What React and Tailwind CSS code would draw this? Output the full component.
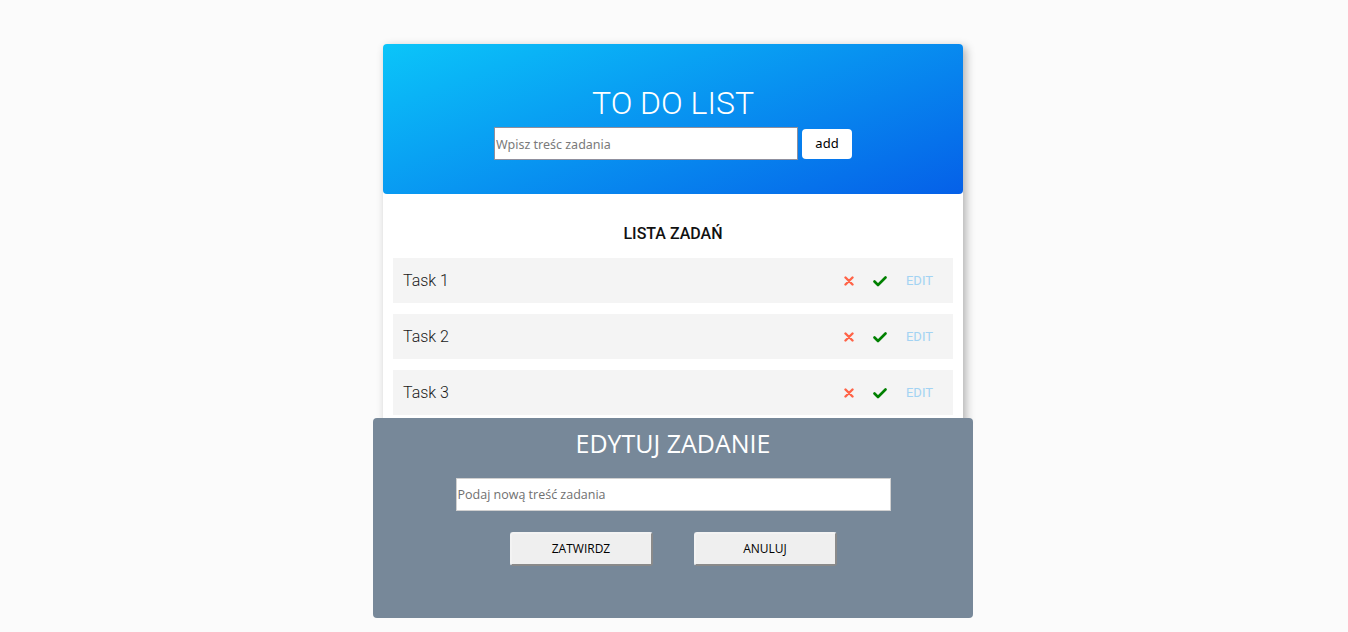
import React, { useState } from "react";

const tasks = ["Task 1", "Task 2", "Task 3"];

const CrossIcon = () => (
  <svg width="10" height="10" viewBox="0 0 10 10">
    <path d="M1.5 1.5 L8.5 8.5 M8.5 1.5 L1.5 8.5" stroke="#ff6347" strokeWidth="2.4" strokeLinecap="round" />
  </svg>
);

const CheckIcon = () => (
  <svg width="14" height="11" viewBox="0 0 14 11">
    <path d="M1.5 5.5 L5 9 L12.5 1.5" stroke="#008000" strokeWidth="2.6" fill="none" strokeLinecap="round" strokeLinejoin="round" />
  </svg>
);

const TaskRow = ({ name }) => (
  <div className="flex items-center h-[45px] bg-[#f4f4f4] pl-[10px] pr-[20px]">
    <span className="flex-1 text-[16px] text-[#1a1a1a] font-light pt-[1px]">{name}</span>
    <div className="flex items-center gap-[19px] pt-[1px]">
      <button className="flex cursor-pointer">
        <CrossIcon />
      </button>
      <button className="flex cursor-pointer">
        <CheckIcon />
      </button>
      <button className="text-[13px] text-[#a3d3f3] cursor-pointer">EDIT</button>
    </div>
  </div>
);

const App = () => {
  const [text, setText] = useState("");
  const [editText, setEditText] = useState("");

  return (
    <div className="min-h-screen bg-[#fbfbfb] pt-[44px] font-['Roboto',sans-serif]">
      <div className="w-[580px] ml-[calc(50%-291px)] bg-white rounded-[4px] shadow-[3px_3px_10px_rgba(0,0,0,0.3)]">
        {/* header */}
        <div className="flex flex-col items-center h-[150px] pt-[40px] rounded-[4px] bg-[linear-gradient(160deg,#0bc5f9,#0560e8)]">
          <h1 className="text-[32px] leading-[38px] font-light text-white">TO DO LIST</h1>
          <div className="flex items-center gap-[4px] mt-[5px]">
            <input
              value={text}
              onChange={(e) => setText(e.target.value)}
              placeholder="Wpisz treśc zadania"
              className="w-[304px] h-[33px] bg-white border border-[#8f8f9d] px-[1px] pt-[1px] text-[12.5px] font-['Noto_Sans',sans-serif] placeholder:text-[#7a7a7a] outline-none"
            />
            <button className="w-[50px] h-[30px] bg-white rounded-[4px] text-[13px] text-black font-['Noto_Sans',sans-serif]">
              add
            </button>
          </div>
        </div>

        {/* list */}
        <div className="px-[10px] pb-[10px]">
          <h2 className="text-center text-[16px] font-medium text-[#111] pt-[29px] pb-[13px] leading-[22px]">LISTA ZADAŃ</h2>
          <div className="flex flex-col gap-[11px]">
            {tasks.map((t) => (
              <TaskRow key={t} name={t} />
            ))}
          </div>
        </div>
      </div>

      {/* edit modal */}
      <div className="fixed top-[418px] left-[calc(50%-301px)] w-[600px] h-[200px] bg-[#778899] rounded-[4px] flex flex-col items-center pt-[8px] font-['Open_Sans',sans-serif]">
        <h3 className="text-[25px] leading-[34px] text-white">EDYTUJ ZADANIE</h3>
        <input
          value={editText}
          onChange={(e) => setEditText(e.target.value)}
          placeholder="Podaj nową treść zadania"
          className="mt-[18px] w-[435px] h-[33px] bg-white border border-[#d0d0d0] px-[1px] text-[12.5px] placeholder:text-[#707070] outline-none"
        />
        <div className="flex gap-[41px] mt-[21px]">
          <button className="w-[143px] h-[34px] bg-[#efefef] rounded-[3px] border-2 border-[#f3f3f3] border-r-[#8a8a8a] border-b-[#8a8a8a] text-[12px] text-black">
            ZATWIRDZ
          </button>
          <button className="w-[143px] h-[34px] bg-[#efefef] rounded-[3px] border-2 border-[#f3f3f3] border-r-[#8a8a8a] border-b-[#8a8a8a] text-[12px] text-black">
            ANULUJ
          </button>
        </div>
      </div>
    </div>
  );
};

export default App;
